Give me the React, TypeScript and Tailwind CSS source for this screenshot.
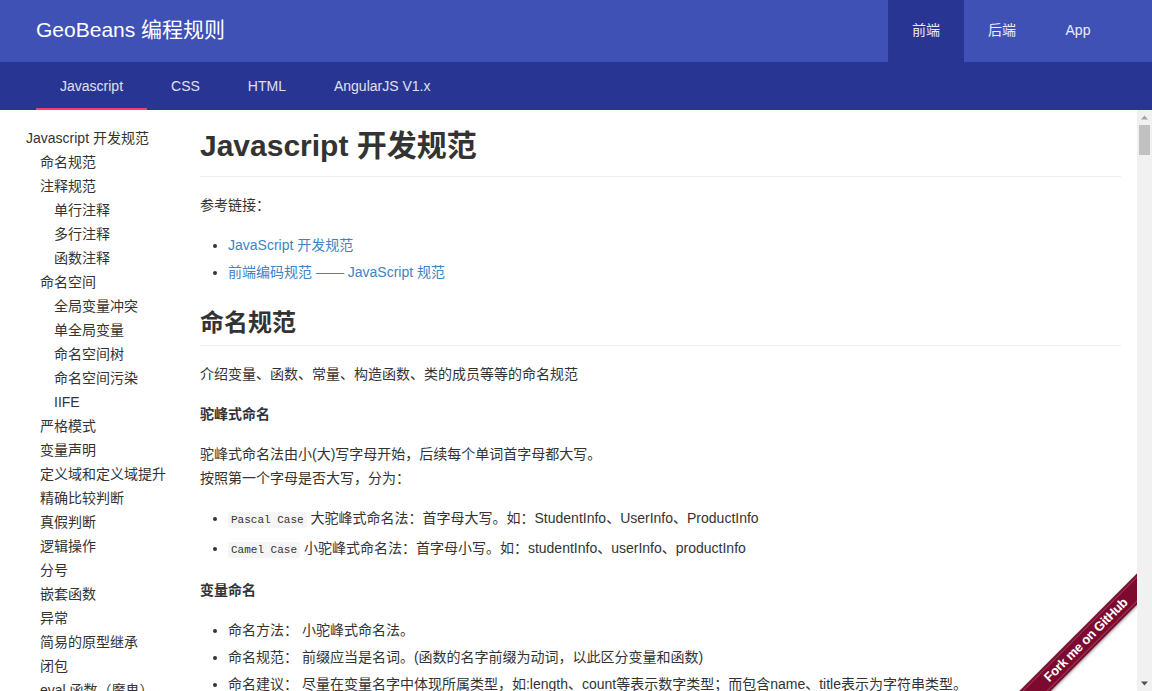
import React from "react";

const topNav = [
  { label: "前端", active: true },
  { label: "后端", active: false },
  { label: "App", active: false },
];

const tabs = [
  { label: "Javascript", active: true },
  { label: "CSS", active: false },
  { label: "HTML", active: false },
  { label: "AngularJS V1.x", active: false },
];

const toc: [string, number][] = [
  ["Javascript 开发规范", 0],
  ["命名规范", 1],
  ["注释规范", 1],
  ["单行注释", 2],
  ["多行注释", 2],
  ["函数注释", 2],
  ["命名空间", 1],
  ["全局变量冲突", 2],
  ["单全局变量", 2],
  ["命名空间树", 2],
  ["命名空间污染", 2],
  ["IIFE", 2],
  ["严格模式", 1],
  ["变量声明", 1],
  ["定义域和定义域提升", 1],
  ["精确比较判断", 1],
  ["真假判断", 1],
  ["逻辑操作", 1],
  ["分号", 1],
  ["嵌套函数", 1],
  ["异常", 1],
  ["简易的原型继承", 1],
  ["闭包", 1],
  ["eval 函数（魔鬼）", 1],
];

const indent = ["pl-0", "pl-[14px]", "pl-[28px]"];

const Code = ({ children }: { children: React.ReactNode }) => (
  <code className="bg-[#f5f5f5] rounded-[3px] px-[3px] py-[2px] text-[11px] font-['Liberation_Mono',monospace] text-[#333]">
    {children}
  </code>
);

const Bullet = ({ children, className = "" }: { children: React.ReactNode; className?: string }) => (
  <li className={`list-disc ${className}`}>{children}</li>
);

// page scrollbar, drawn so it shows up in the screenshot
const Scrollbar = () => (
  <div className="w-[15px] shrink-0 bg-[#f1f1f1] flex flex-col items-center">
    <svg width="15" height="15" viewBox="0 0 15 15">
      <path d="M4 9.5 L7.5 5.5 L11 9.5 Z" fill="#a3a3a3" />
    </svg>
    <div className="w-[11px] h-[30px] bg-[#c1c1c1]" />
    <div className="flex-1" />
    <svg width="15" height="15" viewBox="0 0 15 15">
      <path d="M4 5.5 L11 5.5 L7.5 9.5 Z" fill="#505050" />
    </svg>
  </div>
);

export default function App() {
  return (
    <div className="h-screen flex flex-col font-['Liberation_Sans','Noto_Sans_CJK_SC',sans-serif] text-[#333]">
      {/* app bar */}
      <header className="h-[62px] shrink-0 bg-[#3f51b5] flex items-stretch justify-between pl-9 pr-9">
        <div className="flex items-center text-white text-[21px] pb-[2px]">GeoBeans 编程规则</div>
        <nav className="flex">
          {topNav.map((item) => (
            <a
              key={item.label}
              className={`w-[76px] flex items-center justify-center pb-[2px] text-[14px] text-white/90 ${
                item.active ? "bg-[#283593]" : ""
              }`}
            >
              {item.label}
            </a>
          ))}
        </nav>
      </header>

      {/* tabs */}
      <div className="h-[48px] shrink-0 bg-[#283593] flex px-9">
        {tabs.map((tab) => (
          <a key={tab.label} className="relative px-6 flex items-center text-[14px] text-white/85">
            {tab.label}
            {tab.active && <span className="absolute left-0 right-0 bottom-0 h-[2px] bg-[#ec407a]" />}
          </a>
        ))}
      </div>

      <div className="flex-1 min-h-0 relative flex">
        <div className="flex-1 min-w-0 overflow-hidden flex">
          <aside className="w-[200px] shrink-0 pl-[26px] pt-4 text-[14px] leading-6">
            {toc.map(([label, level]) => (
              <div key={label} className={`${indent[level]} whitespace-nowrap`}>
                {label}
              </div>
            ))}
          </aside>

          <article className="flex-1 min-w-0 pr-4 pt-4 pb-10 text-[14px] leading-6">
            <h1 className="text-[30px] font-bold leading-10 pb-[10px] border-b border-[#eee]">Javascript 开发规范</h1>
            <p className="mt-4">参考链接：</p>
            <ul className="mt-4 pl-7">
              <Bullet>
                <a className="text-[#4183c4]">JavaScript 开发规范</a>
              </Bullet>
              <Bullet className="mt-[3px]">
                <a className="text-[#4183c4]">前端编码规范 —— JavaScript 规范</a>
              </Bullet>
            </ul>

            <h2 className="mt-6 text-[24px] font-bold leading-[30px] pb-[7px] border-b border-[#eee]">命名规范</h2>
            <p className="mt-4">介绍变量、函数、常量、构造函数、类的成员等等的命名规范</p>
            <p className="mt-4 font-bold">驼峰式命名</p>
            <p className="mt-4">
              驼峰式命名法由小(大)写字母开始，后续每个单词首字母都大写。
              <br />
              按照第一个字母是否大写，分为：
            </p>
            <ul className="mt-4 pl-7">
              <Bullet>
                <Code>Pascal Case</Code> 大驼峰式命名法：首字母大写。如：StudentInfo、UserInfo、ProductInfo
              </Bullet>
              <Bullet className="mt-1">
                <Code>Camel Case</Code> 小驼峰式命名法：首字母小写。如：studentInfo、userInfo、productInfo
              </Bullet>
            </ul>

            <p className="mt-4 font-bold">变量命名</p>
            <ul className="mt-4 pl-7">
              <Bullet>命名方法： 小驼峰式命名法。</Bullet>
              <Bullet className="mt-[3px]">命名规范： 前缀应当是名词。(函数的名字前缀为动词，以此区分变量和函数)</Bullet>
              <Bullet className="mt-[3px]">
                命名建议： 尽量在变量名字中体现所属类型，如:length、count等表示数字类型；而包含name、title表示为字符串类型。
              </Bullet>
            </ul>
          </article>
        </div>

        <Scrollbar />

        {/* fork ribbon */}
        <div className="absolute bottom-0 right-[15px] w-[150px] h-[150px] overflow-hidden pointer-events-none">
          <a className="absolute left-[-26px] top-[88px] w-[250px] h-[22px] -rotate-45 bg-[#7d0a2e] py-[2px] shadow-[0_1px_3px_rgba(0,0,0,0.45)]">
            <span className="h-full flex items-center justify-center border-y border-white/20 text-white text-[13px] font-bold tracking-[-0.3px] font-['Liberation_Sans',sans-serif]">
              Fork me on GitHub
            </span>
          </a>
        </div>
      </div>
    </div>
  );
}
